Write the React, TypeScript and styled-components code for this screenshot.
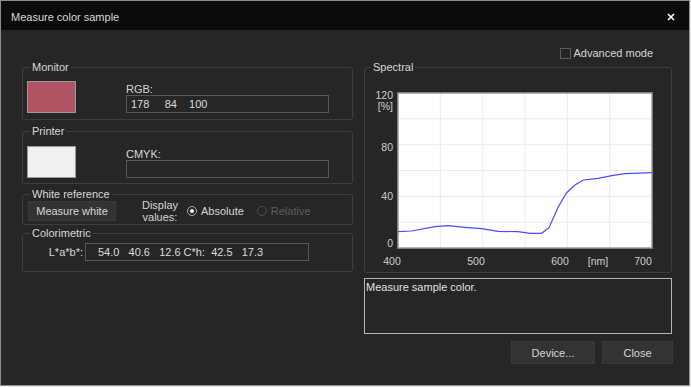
import styled, { createGlobalStyle } from 'styled-components';

const GlobalStyle = createGlobalStyle`
  html, body {
    margin: 0;
    padding: 0;
    background: #f0f0f0;
  }
  * {
    box-sizing: border-box;
  }
`;

const Window = styled.div`
  display: flex;
  flex-direction: column;
  width: 690px;
  height: 386px;
  border: 1px solid #8e8e8e;
  background: #262626;
  color: #d6d6d6;
  font-family: 'Liberation Sans', Arial, sans-serif;
  font-size: 11px;
`;

const TitleBar = styled.div`
  display: flex;
  align-items: center;
  justify-content: space-between;
  height: 29px;
  padding: 3px 14px 0 10px;
  background: #0b0b0b;
  color: #d8d8d8;
  font-size: 11px;
`;

const Body = styled.div`
  flex: 1;
  display: grid;
  grid-template-columns: 331px 308px;
  grid-template-rows: 30px auto;
  column-gap: 11px;
  padding: 0 17px 0 21px;
`;

const TopBar = styled.div`
  grid-column: 1 / -1;
  display: flex;
  justify-content: flex-end;
  align-items: center;
  gap: 3px;
  padding: 16px 19px 0 0;
  line-height: 13px;
`;

const CheckBox = styled.span`
  display: inline-block;
  width: 11px;
  height: 11px;
  border: 1px solid #5c5c5c;
`;

const Column = styled.div`
  display: flex;
  flex-direction: column;
`;

const Group = styled.fieldset<{ $pad: string; $top?: number }>`
  margin: ${({ $top }) => $top ?? 0}px 0 0;
  padding: ${({ $pad }) => $pad};
  border: 1px solid #3e3e3e;
  border-radius: 3px;
  min-width: 0;
`;

const Legend = styled.legend`
  margin-left: 3px;
  padding: 0 2px;
  font-size: 11px;
  line-height: 14px;
  color: #d8d8d8;
`;

const SwatchRow = styled.div`
  display: grid;
  grid-template-columns: 49px 203px;
  column-gap: 50px;
`;

const Swatch = styled.div<{ $color: string }>`
  height: 32px;
  border: 1px solid #9a9a9a;
  background: ${({ $color }) => $color};
`;

const Field = styled.div`
  display: flex;
  flex-direction: column;
`;

const FieldLabel = styled.div`
  height: 14px;
  line-height: 14px;
  padding-top: 1px;
`;

const TextBox = styled.div<{ $width: number; $indent: number }>`
  width: ${({ $width }) => $width}px;
  height: 18px;
  line-height: 16px;
  padding-left: ${({ $indent }) => $indent}px;
  border: 1px solid #575757;
  white-space: pre;
  color: #dcdcdc;
`;

const WhiteRow = styled.div`
  display: flex;
  align-items: center;
  height: 20px;
  padding-left: 1px;
`;

const Button = styled.button<{ $width: number }>`
  width: ${({ $width }) => $width}px;
  height: 20px;
  padding: 0;
  border: 1px solid #393939;
  background: #333333;
  color: #d6d6d6;
  font-family: inherit;
  font-size: 11px;
`;

const DisplayLabel = styled.div`
  width: 46px;
  margin-left: 21px;
  text-align: center;
  line-height: 12px;
`;

const Radio = styled.label<{ $disabled?: boolean }>`
  display: flex;
  align-items: center;
  gap: 4px;
  margin-left: ${({ $disabled }) => ($disabled ? 13 : 4)}px;
  color: ${({ $disabled }) => ($disabled ? '#5e5e5e' : '#d6d6d6')};
`;

const RadioDot = styled.span<{ $checked?: boolean; $disabled?: boolean }>`
  display: inline-flex;
  align-items: center;
  justify-content: center;
  width: 10px;
  height: 10px;
  border-radius: 50%;
  border: 1px solid ${({ $disabled }) => ($disabled ? '#4e4e4e' : '#a8a8a8')};

  &::after {
    content: '';
    display: ${({ $checked }) => ($checked ? 'block' : 'none')};
    width: 4px;
    height: 4px;
    border-radius: 50%;
    background: #f2f2f2;
  }
`;

const LabRow = styled.div`
  display: flex;
  align-items: center;
`;

const LabLabel = styled.div`
  width: 58px;
  padding-right: 2px;
  text-align: right;
`;

const Chart = styled.svg`
  display: block;
`;

const MessageBox = styled.div`
  height: 56px;
  margin-top: 5px;
  padding: 2px 1px;
  border: 1px solid #b4b4b4;
  color: #dde3ea;
  line-height: 13px;
`;

const ButtonRow = styled.div`
  display: flex;
  justify-content: flex-end;
  gap: 7px;
  margin-top: 7px;
  margin-right: -1px;

  & > button {
    height: 23px;
  }
`;

const curve: [number, number][] = [
  [398, 231.7], [411.7, 231], [435, 226.7], [448, 225.7], [465, 227.3],
  [481.7, 228.7], [498, 231.3], [518, 231.7], [530, 233.3], [541.7, 233.3],
  [549, 227.7], [558.3, 206.7], [566.7, 192.7], [575, 185], [583.3, 180],
  [598.3, 178.3], [611.7, 175.7], [625, 173.7], [651.7, 172.7],
];

const gridX = [440.3, 482.7, 525, 567.3, 609.7];
const gridY = [118.8, 144.7, 170.5, 196.3, 222.2];

const yLabels: [string, number][] = [
  ['120', 98.5], ['[%]', 110], ['80', 151], ['40', 200], ['0', 247],
];
const xLabels: [string, number][] = [
  ['400', 392], ['500', 476], ['600', 560], ['[nm]', 598], ['700', 643],
];

function SpectralChart() {
  return (
    <Chart width={300} height={183} viewBox="368 88 300 183">
      <rect x={398} y={93} width={254} height={155} fill="#ffffff" />
      {gridX.map((x) => (
        <line key={x} x1={x} y1={93} x2={x} y2={248} stroke="#ececec" />
      ))}
      {gridY.map((y) => (
        <line key={y} x1={398} y1={y} x2={652} y2={y} stroke="#ececec" />
      ))}
      <rect x={398} y={93} width={254} height={155} fill="none" stroke="#9c9c9c" strokeWidth={1.5} />
      <polyline
        points={curve.map(([x, y]) => `${x},${y}`).join(' ')}
        fill="none"
        stroke="#4a4aff"
        strokeWidth={1.2}
      />
      {yLabels.map(([t, y]) => (
        <text key={t} x={393} y={y} textAnchor="end" fontSize={10.5} fill="#cfcfcf" fontFamily="'Liberation Sans', Arial, sans-serif">
          {t}
        </text>
      ))}
      {xLabels.map(([t, x]) => (
        <text key={t} x={x} y={264.5} textAnchor="middle" fontSize={10.5} fill="#cfcfcf" fontFamily="'Liberation Sans', Arial, sans-serif">
          {t}
        </text>
      ))}
    </Chart>
  );
}

export default function App() {
  return (
    <>
      <GlobalStyle />
      <Window>
        <TitleBar>
          <span>Measure color sample</span>
          <svg width="8" height="8" viewBox="0 0 8 8">
            <path d="M1 1 L7 7 M7 1 L1 7" stroke="#ffffff" strokeWidth="1.6" />
          </svg>
        </TitleBar>
        <Body>
          <TopBar>
            <CheckBox />
            <span>Advanced mode</span>
          </TopBar>

          <Column>
            <Group $pad="7px 4px 6px">
              <Legend>Monitor</Legend>
              <SwatchRow>
                <Swatch $color="#b25464" />
                <Field>
                  <FieldLabel>RGB:</FieldLabel>
                  <TextBox $width={203} $indent={4}>{'178     84    100'}</TextBox>
                </Field>
              </SwatchRow>
            </Group>

            <Group $pad="8px 4px 5px" $top={4}>
              <Legend>Printer</Legend>
              <SwatchRow>
                <Swatch $color="#f0f0f0" />
                <Field>
                  <FieldLabel>CMYK:</FieldLabel>
                  <TextBox $width={203} $indent={4} />
                </Field>
              </SwatchRow>
            </Group>

            <Group $pad="0 4px 3px" $top={3}>
              <Legend>White reference</Legend>
              <WhiteRow>
                <Button $width={88}>Measure white</Button>
                <DisplayLabel>
                  Display
                  <br />
                  values:
                </DisplayLabel>
                <Radio>
                  <RadioDot $checked />
                  Absolute
                </Radio>
                <Radio $disabled>
                  <RadioDot $disabled />
                  Relative
                </Radio>
              </WhiteRow>
            </Group>

            <Group $pad="3px 4px 10px" $top={1}>
              <Legend>Colorimetric</Legend>
              <LabRow>
                <LabLabel>L*a*b*:</LabLabel>
                <TextBox $width={224} $indent={12}>{'54.0   40.6   12.6 C*h:  42.5   17.3'}</TextBox>
              </LabRow>
            </Group>
          </Column>

          <Column>
            <Group $pad="14px 3px 1px">
              <Legend>Spectral</Legend>
              <SpectralChart />
            </Group>
            <MessageBox>Measure sample color.</MessageBox>
            <ButtonRow>
              <Button $width={84}>Device...</Button>
              <Button $width={71}>Close</Button>
            </ButtonRow>
          </Column>
        </Body>
      </Window>
    </>
  );
}
